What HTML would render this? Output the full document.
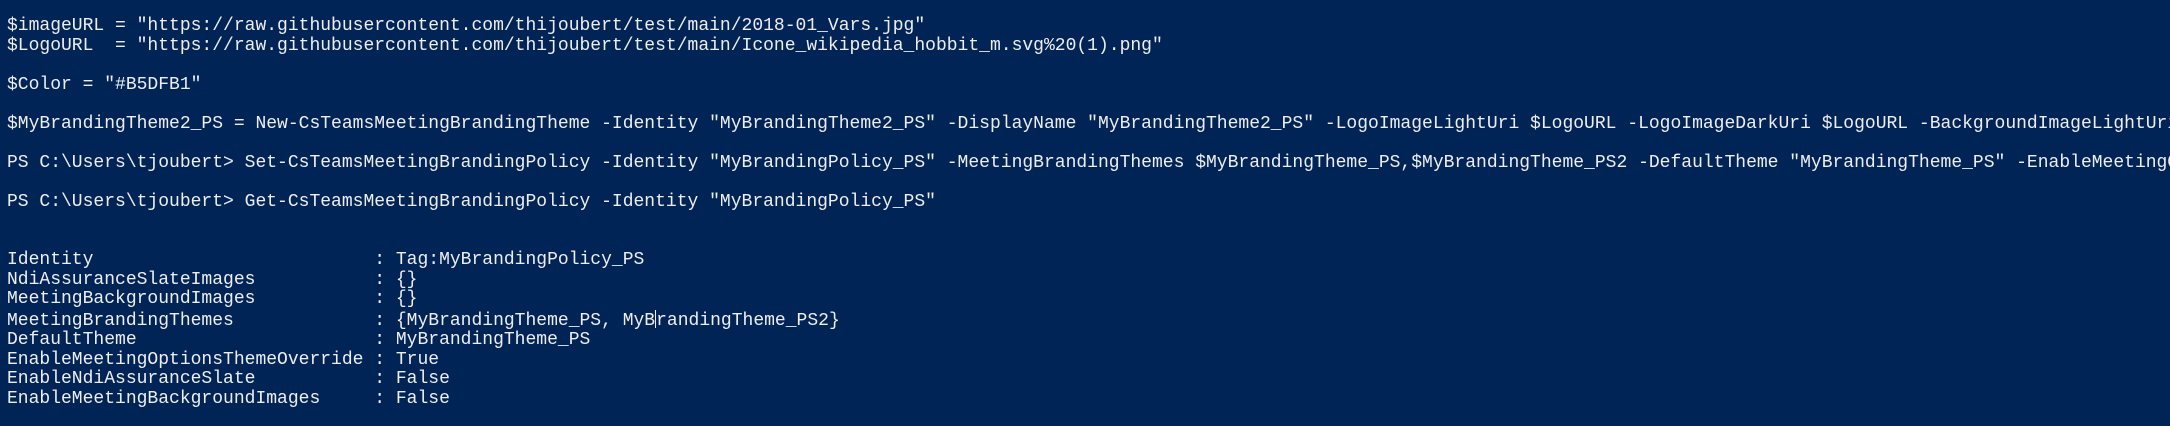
<!DOCTYPE html>
<html><head><meta charset="utf-8"><style>
html,body{margin:0;padding:0;background:#012456;width:2170px;height:426px;overflow:hidden}
.w{position:absolute;left:0;top:0;width:2170px;height:426px;overflow:hidden}
pre{margin:0;position:absolute;left:7px;top:17px;font-family:"Liberation Mono",monospace;font-size:18px;line-height:19.5px;color:#eeedf0;white-space:pre}
.c{display:inline-block;width:0;border-left:1.5px solid #eeedf0;height:18px;vertical-align:-3px}
</style></head><body><div class="w"><pre>$imageURL = "https://raw.githubusercontent.com/thijoubert/test/main/2018-01_Vars.jpg"
$LogoURL  = "https://raw.githubusercontent.com/thijoubert/test/main/Icone_wikipedia_hobbit_m.svg%20(1).png"

$Color = "#B5DFB1"

$MyBrandingTheme2_PS = New-CsTeamsMeetingBrandingTheme -Identity "MyBrandingTheme2_PS" -DisplayName "MyBrandingTheme2_PS" -LogoImageLightUri $LogoURL -LogoImageDarkUri $LogoURL -BackgroundImageLightUri

PS C:\Users\tjoubert&gt; Set-CsTeamsMeetingBrandingPolicy -Identity "MyBrandingPolicy_PS" -MeetingBrandingThemes $MyBrandingTheme_PS,$MyBrandingTheme_PS2 -DefaultTheme "MyBrandingTheme_PS" -EnableMeetingOptionsThemeOverride

PS C:\Users\tjoubert&gt; Get-CsTeamsMeetingBrandingPolicy -Identity "MyBrandingPolicy_PS"


Identity                          : Tag:MyBrandingPolicy_PS
NdiAssuranceSlateImages           : {}
MeetingBackgroundImages           : {}
MeetingBrandingThemes             : {MyBrandingTheme_PS, MyB<span class="c"></span>randingTheme_PS2}
DefaultTheme                      : MyBrandingTheme_PS
EnableMeetingOptionsThemeOverride : True
EnableNdiAssuranceSlate           : False
EnableMeetingBackgroundImages     : False</pre></div></body></html>
